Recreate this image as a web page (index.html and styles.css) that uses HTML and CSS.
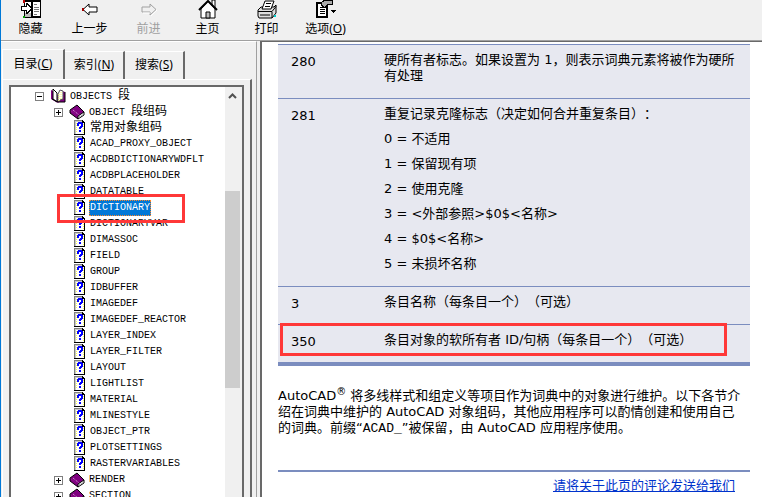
FILE: index.html
```html
<!DOCTYPE html>
<html lang="zh-CN">
  <head>
    <meta charset="UTF-8" />
    <meta name="viewport" content="width=device-width, initial-scale=1.0" />
    <title>DXF 参考</title>
    <link rel="stylesheet" href="styles.css">
  </head>
  <body>
    <svg class="defs" aria-hidden="true">
      <symbol id="open" viewBox="0 0 16 16">
        <path d="M1 2l2 1V1l4 4 1 3 2-3 1-1 1-1 3 1v10H9l-1 1-2-1-5-3z" fill="#800080" />
        <path d="M3 1l4 4v9l-4-3z" fill="#fff" stroke="#000" />
        <path d="M8 6l2-4 3 1v8l-3 1-2 2z" fill="#fff" stroke="#555" />
        <path d="M11 4v8M9 6v7" stroke="#ffff60" stroke-dasharray="1 1" />
        <path d="M15 4v10H8l-6-3" fill="none" stroke="#000" />
      </symbol>
      <symbol id="book" viewBox="0 0 16 16">
        <path d="M1 6l7-5 7 7-6 5z" fill="#800080" />
        <path d="M1 6v3l8 6v-3z" fill="#800080" />
        <path d="M9 12l6-4v3l-6 4z" fill="#fff" />
        <path d="M1 6l7-5 7 7-6 4v3L1 9zM15 8v3l-6 4" fill="none" stroke="#000" />
        <path d="M10 13l5-3" stroke="#888" stroke-dasharray="1 1" />
        <path d="M4 6l6 5" stroke="#e0b0e0" stroke-dasharray="1 1" />
      </symbol>
      <symbol id="topic" viewBox="0 0 16 16" shape-rendering="crispEdges">
        <path d="M3 1h11v14H3z" fill="#fff" />
        <path d="M3 0h9v1H4v13H3z" fill="#808080" />
        <path d="M4 1h8v1H5v12H4z" fill="#c8c8c8" />
        <path d="M11 0h1v1h1v1h1v13H3v-1h10V3h-2z" fill="#000" />
        <path d="M5 3v10M12 4v9" stroke="#ffff50" stroke-dasharray="1 1" />
        <path d="M7 2h4v1h1v4h-1v1h-1v1H8V7h1V6h1V4H8v2H6V3h1zM8 10h2v2H8z" fill="#00f" />
      </symbol>
    </svg>

    <header class="toolbar">
      <button type="button">
        <svg width="20" height="20" viewBox="0 0 20 20" shape-rendering="crispEdges">
          <path d="M3 0h17v18H3z" fill="#000" />
          <path d="M4 2h6v15H4zM12 2h7v14h-7z" fill="#fff" />
          <path d="M13 4.500h3M13 7.500h5M13 9.500h5M13 11.500h5M13 14.500h3" stroke="#777" />
          <path d="M4 13h6v4H4z" fill="#bbb" />
          <path d="M0 6h5V3h1v1h1v1h1v1h1v1h1v2H9v1H8v1H7v1H6v1H5v-3H0z" fill="#fff" stroke="#000" />
          <path d="M2 0h2v3H2z" fill="#c00000" />
          <path d="M2 16h2v2H2z" fill="#00a000" />
        </svg>
        <span>隐藏</span>
      </button>
      <button type="button">
        <svg width="20" height="20" viewBox="0 0 20 20">
          <path d="M3 9.500l6-5.500v3h8v5H9v3z" fill="#fff" stroke="#000" />
          <path d="M2 8h2v3H2z" fill="#a00000" />
        </svg>
        <span>上一步</span>
      </button>
      <button type="button" disabled>
        <svg width="20" height="20" viewBox="0 0 20 20">
          <path d="M17 9.500l-6-5.500v3H3v5h8v3z" fill="#f0f0f0" stroke="#a0a0a0" />
          <path d="M18 10l-6 6M4 13h7" stroke="#fff" />
        </svg>
        <span>前进</span>
      </button>
      <button type="button">
        <svg width="20" height="20" viewBox="0 0 20 20">
          <path d="M3 9l7-8 7 8v9H3z" fill="#fff" stroke="#000" />
          <path d="M14 0h3v8l-3-3z" fill="#fff" stroke="#000" />
          <path d="M1 10l9-9 9 9" fill="none" stroke="#000" stroke-width="2" />
          <path d="M8 18v-6h4v6z" fill="#bbb" stroke="#000" />
        </svg>
        <span>主页</span>
      </button>
      <button type="button">
        <svg width="20" height="20" viewBox="0 0 20 20">
          <path d="M1 10l3-3h13l2-2v8l-4 5H2l-1-2z" fill="#ddd" stroke="#000" />
          <path d="M5 9l3-8h9l-3 8z" fill="#fff" stroke="#000" stroke-width="1" />
          <path d="M9 3.500h5M8 6.500h5" stroke="#000" />
          <path d="M1 11.500h14l4-5M3 15h10M15 12v6" fill="none" stroke="#000" stroke-width="1" />
          <path d="M17 15h2v2h-2z" fill="#00d0d0" />
        </svg>
        <span>打印</span>
      </button>
      <button type="button">
        <svg width="20" height="20" viewBox="0 0 20 20" shape-rendering="crispEdges">
          <path d="M0 2h12v16H0z" fill="#000" />
          <path d="M2 4h8v12H2z" fill="#fff" />
          <path d="M4 7.500h4M4 9.500h5M4 11.500h5M4 13.500h5" stroke="#000" />
          <path d="M5 3l4-3h7v4h-3l-3 2-1 2-4-3z" fill="#aaa" stroke="#000" />
          <path d="M15 10h5v1h-1v1h-1v1h-1v-1h-1v-1h-1z" fill="#000" />
        </svg>
        <span>选项(<u>O</u>)</span>
      </button>
    </header>

    <div class="workspace">
      <aside class="nav">
        <div class="tabs" role="tablist">
          <button type="button" role="tab" class="tab active" aria-selected="true">目录(<u>C</u>)</button>
          <button type="button" role="tab" class="tab">索引(<u>N</u>)</button>
          <button type="button" role="tab" class="tab">搜索(<u>S</u>)</button>
        </div>
        <div class="panel">
          <div class="tree-box">
            <ul class="tree">
              <li class="root"><i class="toggle minus"></i><svg><use href="#open" /></svg><span>OBJECTS <b>段</b></span></li>
              <li class="folder"><i class="toggle plus"></i><svg><use href="#book" /></svg><span>OBJECT <b>段组码</b></span></li>
              <li><svg><use href="#topic" /></svg><span><b>常用对象组码</b></span></li>
              <li><svg><use href="#topic" /></svg><span>ACAD_PROXY_OBJECT</span></li>
              <li><svg><use href="#topic" /></svg><span>ACDBDICTIONARYWDFLT</span></li>
              <li><svg><use href="#topic" /></svg><span>ACDBPLACEHOLDER</span></li>
              <li><svg><use href="#topic" /></svg><span>DATATABLE</span></li>
              <li class="marked"><svg><use href="#topic" /></svg><span class="selected">DICTIONARY</span></li>
              <li><svg><use href="#topic" /></svg><span>DICTIONARYVAR</span></li>
              <li><svg><use href="#topic" /></svg><span>DIMASSOC</span></li>
              <li><svg><use href="#topic" /></svg><span>FIELD</span></li>
              <li><svg><use href="#topic" /></svg><span>GROUP</span></li>
              <li><svg><use href="#topic" /></svg><span>IDBUFFER</span></li>
              <li><svg><use href="#topic" /></svg><span>IMAGEDEF</span></li>
              <li><svg><use href="#topic" /></svg><span>IMAGEDEF_REACTOR</span></li>
              <li><svg><use href="#topic" /></svg><span>LAYER_INDEX</span></li>
              <li><svg><use href="#topic" /></svg><span>LAYER_FILTER</span></li>
              <li><svg><use href="#topic" /></svg><span>LAYOUT</span></li>
              <li><svg><use href="#topic" /></svg><span>LIGHTLIST</span></li>
              <li><svg><use href="#topic" /></svg><span>MATERIAL</span></li>
              <li><svg><use href="#topic" /></svg><span>MLINESTYLE</span></li>
              <li><svg><use href="#topic" /></svg><span>OBJECT_PTR</span></li>
              <li><svg><use href="#topic" /></svg><span>PLOTSETTINGS</span></li>
              <li><svg><use href="#topic" /></svg><span>RASTERVARIABLES</span></li>
              <li class="folder"><i class="toggle plus"></i><svg><use href="#book" /></svg><span>RENDER</span></li>
              <li class="folder"><i class="toggle plus"></i><svg><use href="#book" /></svg><span>SECTION</span></li>
            </ul>
            <div class="scrollbar">
              <svg width="9" height="6" viewBox="0 0 9 6"><path d="M1 5l3.500-3.500L8 5" fill="none" stroke="#505050" stroke-width="2" /></svg>
              <div class="thumb"></div>
            </div>
          </div>
        </div>
      </aside>

      <main class="content">
        <table class="codes">
          <tr>
            <td>280</td>
            <td>硬所有者标志。如果设置为 1，则表示词典元素将被作为硬所有处理</td>
          </tr>
          <tr>
            <td>281</td>
            <td>
              <p>重复记录克隆标志（决定如何合并重复条目）：</p>
              <p>0 = 不适用</p>
              <p>1 = 保留现有项</p>
              <p>2 = 使用克隆</p>
              <p>3 = &lt;外部参照&gt;$0$&lt;名称&gt;</p>
              <p>4 = $0$&lt;名称&gt;</p>
              <p>5 = 未损坏名称</p>
            </td>
          </tr>
          <tr>
            <td>3</td>
            <td>条目名称（每条目一个）（可选）</td>
          </tr>
          <tr class="marked-row">
            <td>350</td>
            <td>条目对象的软所有者 ID/句柄（每条目一个）（可选）</td>
          </tr>
        </table>
        <p class="note">AutoCAD<sup>®</sup> 将多线样式和组定义等项目作为词典中的对象进行维护。以下各节介绍在词典中维护的 AutoCAD 对象组码，其他应用程序可以酌情创建和使用自己的词典。前缀“<code>ACAD_</code>”被保留，由 AutoCAD 应用程序使用。</p>
        <footer><a href="#">请将关于此页的评论发送给我们</a></footer>
      </main>
    </div>
  </body>
</html>
```
FILE: styles.css
```css
*,
*::after {
  box-sizing: border-box;
}

body {
  margin: 0;
  height: 100vh;
  overflow: hidden;
  display: flex;
  flex-direction: column;
  background-color: #f0f0f0;
  border-left: 1px solid #0078d7;
  font-family: "Noto Sans", "Noto Sans CJK SC", sans-serif;
  font-size: 12px;
  color: #000;
}

button {
  border: 0;
  padding: 0;
  background: none;
  color: inherit;
  font: inherit;
}

.defs {
  display: none;
}

/* toolbar */
.toolbar {
  display: flex;
  height: 41px;
  flex-shrink: 0;
  border-bottom: 1px solid #a0a0a0;
}

.toolbar button {
  width: 59px;
  display: flex;
  flex-direction: column;
  align-items: center;
  line-height: 18px;
  white-space: nowrap;
}

.toolbar button:disabled {
  color: #a0a0a0;
}

.workspace {
  flex: 1;
  display: flex;
  min-height: 0;
}

/* left side: tabs and tree */
.nav {
  width: 256px;
  flex-shrink: 0;
  display: flex;
  flex-direction: column;
  padding: 7px 4px 0 1px;
  border-top: 1px solid #fff;
  border-right: 1px solid #a0a0a0;
}

.tabs {
  display: flex;
  align-items: flex-end;
  height: 30px;
}

.tab {
  width: 60px;
  height: 28px;
  padding-bottom: 4px;
  border-top: 1px solid #fff;
  border-right: 2px solid #696969;
}

.tab.active {
  width: 63px;
  height: 30px;
  border-left: 1px solid #fff;
}

.panel {
  flex: 1;
  min-height: 0;
  padding: 5px 6px 0;
  border-left: 1px solid #fff;
  border-right: 2px solid #696969;
  border-top: 1px solid #fff;
}

.tree-box {
  height: 100%;
  display: flex;
  overflow: hidden;
  background-color: #fff;
  border: 2px solid #696969;
  border-bottom: 0;
}

.tree {
  flex: 1;
  margin: 0;
  padding: 1px 0 0;
  list-style: none;
  font-family: "Liberation Mono", "Noto Sans CJK SC", monospace;
  font-size: 10px;
}

.tree li {
  display: flex;
  align-items: center;
  height: 16px;
  padding-left: 60px;
  white-space: nowrap;
}

.tree li.root {
  padding-left: 24px;
}

.tree li.folder {
  padding-left: 43px;
}

.tree svg {
  width: 16px;
  height: 16px;
  margin-right: 2px;
}

.tree .root svg,
.tree .folder svg {
  margin-right: 3px;
}

.tree span {
  line-height: 16px;
  padding: 0 1px;
}

.tree b {
  font-size: 12px;
  font-weight: normal;
}

.toggle {
  width: 9px;
  height: 9px;
  margin-right: 6px;
  border: 1px solid #808080;
  background: linear-gradient(#000, #000) center / 5px 1px no-repeat;
}

.toggle.plus {
  background: linear-gradient(#000, #000) center / 5px 1px no-repeat,
    linear-gradient(#000, #000) center / 1px 5px no-repeat;
}

.tree .selected {
  background-color: #0078d7;
  color: #fff;
  outline: 1px dotted #ff8728;
  outline-offset: -1px;
}

.marked {
  position: relative;
}

.marked::after {
  content: "";
  position: absolute;
  left: 46px;
  top: -6px;
  width: 128px;
  height: 29px;
  border: 3px solid #ff3838;
}

.scrollbar {
  width: 17px;
  background-color: #f0f0f0;
}

.scrollbar svg {
  display: block;
  margin: 6px 3px 92px;
}

.thumb {
  height: 197px;
  width: 15px;
  background-color: #cdcdcd;
}

/* topic text */
.content {
  flex: 1;
  margin-left: 3px;
  padding: 2px 12px 0 16px;
  background-color: #fff;
  border-top: 1px solid #696969;
  border-left: 2px solid #696969;
  font-family: "DejaVu Sans", "Noto Sans CJK SC", sans-serif;
  font-size: 13px;
  line-height: 16px;
  text-spacing-trim: space-all;
}

.codes {
  width: 100%;
  border-collapse: collapse;
  background-color: #e7e8f0;
  border-bottom: 4px solid #7b8dbf;
}

.codes td {
  border-top: 1px solid #7b8dbf;
  padding: 7px 12px 14px 13px;
  vertical-align: top;
}

.codes td:first-child {
  width: 93px;
  padding-top: 9px;
  padding-bottom: 12px;
}

.codes p {
  margin: 0 0 9px;
}

.codes p:last-child {
  margin: 0;
}

.marked-row {
  position: relative;
}

.marked-row::after {
  content: "";
  position: absolute;
  left: 2px;
  top: -2px;
  right: 23px;
  height: 33px;
  border: 3px solid #ff3838;
}

.note {
  margin: 22px 0 34px;
  padding-right: 8px;
}

.note sup {
  font-size: 10px;
  line-height: 0;
}

.note code {
  font-family: "Liberation Mono", monospace;
  line-height: 1;
}

footer {
  border-top: 2px solid #7b8dbf;
  padding: 6px 15px;
  text-align: right;
}

footer a {
  color: #0033cc;
}
```
